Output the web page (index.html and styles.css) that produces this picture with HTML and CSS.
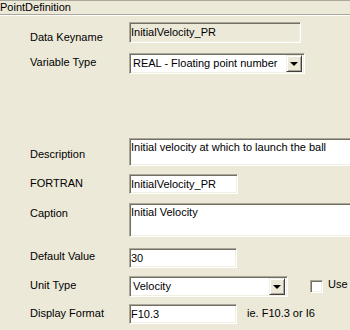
FILE: index.html
```html
<!DOCTYPE html>
<html>
<head>
	<title>PointDefinition</title>
	<link rel="stylesheet" href="styles.css">
</head>
<body>
	<div class="title">PointDefinition</div>
	<div class="form">
		<div class="row r1">
			<div class="label">Data Keyname</div>
			<div class="field disabled w172">InitialVelocity_PR</div>
		</div>
		<div class="row r2">
			<div class="label">Variable Type</div>
			<div class="field combo w176">
				<span class="value">REAL - Floating point number</span>
				<span class="drop"><span class="arrow"></span></span>
			</div>
		</div>
		<div class="row r3">
			<div class="label">Description</div>
			<div class="field area h28">Initial velocity at which to launch the ball</div>
		</div>
		<div class="row r4">
			<div class="label">FORTRAN</div>
			<div class="field w109">InitialVelocity_PR</div>
		</div>
		<div class="row r5">
			<div class="label">Caption</div>
			<div class="field area h34">Initial Velocity</div>
		</div>
		<div class="row r6">
			<div class="label">Default Value</div>
			<div class="field w108">30</div>
		</div>
		<div class="row r7">
			<div class="label">Unit Type</div>
			<div class="field combo w159">
				<span class="value">Velocity</span>
				<span class="drop"><span class="arrow"></span></span>
			</div>
			<span class="check"></span>
			<span class="check-text">Use</span>
		</div>
		<div class="row r8">
			<div class="label">Display Format</div>
			<div class="field w108">F10.3</div>
			<span class="hint">ie. F10.3 or I6</span>
		</div>
	</div>
</body>
</html>
```

FILE: styles.css
```css
body {
	margin: 0;
	width: 350px;
	height: 330px;
	overflow: hidden;
	background: #ECE9D8;
	font-family: "Liberation Sans", Arial, sans-serif;
	font-size: 11px;
	line-height: 13px;
	color: #000;
}

.title {
	height: 13px;
	border-top: 1px solid #ACA899;
	border-bottom: 1px solid #ACA899;
	box-shadow: 0 1px 0 #FFF;
	white-space: nowrap;
}

.row {
	display: flex;
	align-items: flex-start;
	white-space: nowrap;
}

.label {
	width: 99px;
	padding-left: 30px;
	flex: none;
}

.field {
	box-sizing: border-box;
	height: 20px;
	flex: none;
	display: flex;
	align-items: center;
	padding: 0 1px;
	background: #FFF;
	border: 1px solid;
	border-color: #ACA899 #FFF #FFF #ACA899;
	box-shadow: inset 1px 1px 0 #716F64, inset -1px -1px 0 #F1EFE2;
	overflow: hidden;
}

.disabled {
	background: #ECE9D8;
	height: 21px;
}

/* multi-line boxes run on past the right edge of the panel */
.area {
	width: 221px;
	border-right-width: 0;
	box-shadow: inset 1px 1px 0 #716F64, inset 0 -1px 0 #F1EFE2;
	align-items: flex-start;
	padding-top: 2px;
}

.h28 { height: 28px; }
.h34 { height: 34px; }

.w172 { width: 172px; }
.w176 { width: 176px; }
.w159 { width: 159px; }
.w109 { width: 109px; }
.w108 { width: 108px; }

.combo {
	height: 21px;
	padding: 2px 2px 2px 3px;
	justify-content: space-between;
}

.combo .value {
	flex: 1;
}

.drop {
	box-sizing: border-box;
	width: 16px;
	height: 17px;
	flex: none;
	display: flex;
	align-items: center;
	justify-content: center;
	background: #ECE9D8;
	border: 1px solid;
	border-color: #F1EFE2 #404040 #404040 #F1EFE2;
	box-shadow: inset 1px 1px 0 #FFF, inset -1px -1px 0 #ACA899;
}

.arrow {
	width: 0;
	height: 0;
	border-left: 4px solid transparent;
	border-right: 4px solid transparent;
	border-top: 4px solid #000;
	margin-top: 1px;
}

.check {
	box-sizing: border-box;
	width: 13px;
	height: 13px;
	margin: 4px 0 0 22px;
	flex: none;
	background: #FFF;
	border: 1px solid;
	border-color: #ACA899 #FFF #FFF #ACA899;
	box-shadow: inset 1px 1px 0 #716F64, inset -1px -1px 0 #F1EFE2;
}

.check-text {
	margin: 2px 0 0 5px;
}

.hint {
	margin: 3px 0 0 10px;
}

/* vertical placement of the rows */
.r1 { margin-top: 7px; }
.r1 .label { margin-top: 9px; }
.r2 { margin-top: 9px; }
.r2 .label { margin-top: 3px; }
.r3 { margin-top: 64px; }
.r3 .label { margin-top: 10px; }
.r4 { margin-top: 8px; }
.r4 .label { margin-top: 3px; }
.r5 { margin-top: 9px; }
.r5 .label { margin-top: 4px; }
.r6 { margin-top: 11px; }
.r6 .label { margin-top: 2px; }
.r7 { margin-top: 8px; }
.r7 .label { margin-top: 3px; }
.r8 { margin-top: 7px; }
.r8 .label { margin-top: 3px; }
```
